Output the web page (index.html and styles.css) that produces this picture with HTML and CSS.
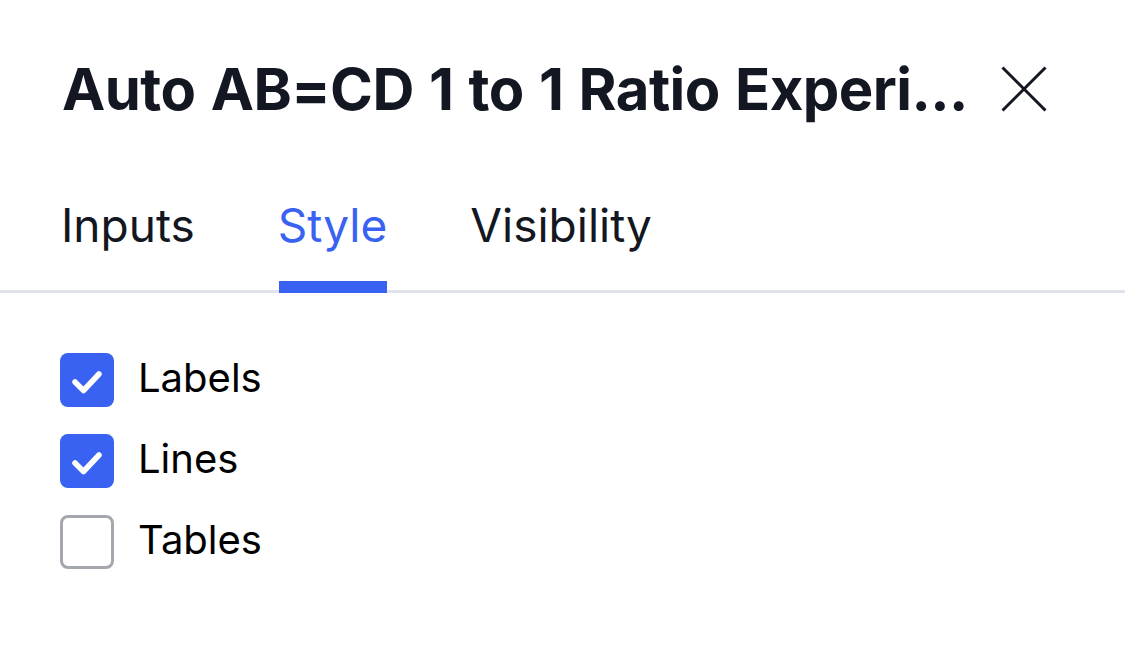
FILE: index.html
```html
<!DOCTYPE html>
<html lang="en">
<head>
<meta charset="utf-8">
<title>Style</title>
<link rel="stylesheet" href="styles.css">
</head>
<body>
<div class="dialog">
  <header class="header">
    <h1 class="title">Auto AB=CD 1 to 1 Ratio Experi...</h1>
    <button class="close" aria-label="Close">
      <svg viewBox="0 0 46 46" width="46" height="46"><path d="M1.5 1.5L44.5 44.5M44.5 1.5L1.5 44.5" stroke="#131722" stroke-width="3" fill="none"/></svg>
    </button>
  </header>
  <nav class="tabs">
    <div class="tab">Inputs</div>
    <div class="tab active">Style</div>
    <div class="tab">Visibility</div>
  </nav>
  <div class="options">
    <label class="row">
      <span class="box checked"><svg viewBox="0 0 54 54" width="54" height="54"><path d="M15 29L23.5 37.5L39 21" stroke="#fff" stroke-width="5.5" stroke-linecap="round" stroke-linejoin="round" fill="none"/></svg></span>
      <span class="text">Labels</span>
    </label>
    <label class="row">
      <span class="box checked"><svg viewBox="0 0 54 54" width="54" height="54"><path d="M15 29L23.5 37.5L39 21" stroke="#fff" stroke-width="5.5" stroke-linecap="round" stroke-linejoin="round" fill="none"/></svg></span>
      <span class="text">Lines</span>
    </label>
    <label class="row">
      <span class="box"></span>
      <span class="text">Tables</span>
    </label>
  </div>
</div>
</body>
</html>
```

FILE: styles.css
```css
html, body {
  margin: 0;
  padding: 0;
  background: #ffffff;
}
body {
  font-family: Inter, "Noto Sans", "Liberation Sans", sans-serif;
  color: #131722;
  width: 1125px;
  height: 652px;
  overflow: hidden;
}
.dialog {
  display: flex;
  flex-direction: column;
}
.header {
  display: flex;
  align-items: center;
  justify-content: space-between;
  padding: 59px 78px 0 62px;
  height: 60px;
}
.title {
  margin: 0;
  font-size: 58px;
  line-height: 60px;
  font-weight: 700;
  letter-spacing: -0.55px;
  word-spacing: 2px;
  white-space: nowrap;
}
.close {
  border: 0;
  background: none;
  padding: 0;
  width: 46px;
  height: 46px;
  display: flex;
}
.tabs {
  display: flex;
  gap: 83px;
  padding: 0 0 0 61px;
  margin-top: 83px;
  border-bottom: 3px solid #e0e3eb;
}
.tab {
  position: relative;
  font-size: 46px;
  line-height: 46px;
  padding-bottom: 42px;
  color: #131722;
}
.tab.active {
  color: #3a62f2;
}
.tab.active::after {
  content: "";
  position: absolute;
  left: 1px;
  right: 0;
  bottom: -3px;
  height: 12px;
  background: #3a62f2;
}
.options {
  display: flex;
  flex-direction: column;
  gap: 27px;
  padding: 60px 0 0 60px;
}
.row {
  display: flex;
  align-items: center;
  gap: 24px;
  height: 54px;
}
.box {
  box-sizing: border-box;
  width: 54px;
  height: 54px;
  border-radius: 8px;
  border: 3px solid #a5a7ae;
  display: flex;
  background: #fff;
}
.box.checked {
  border: 0;
  background: #3a62f2;
}
.text {
  font-size: 40px;
  line-height: 40px;
  margin-top: -4px;
  color: #000000;
}
```
